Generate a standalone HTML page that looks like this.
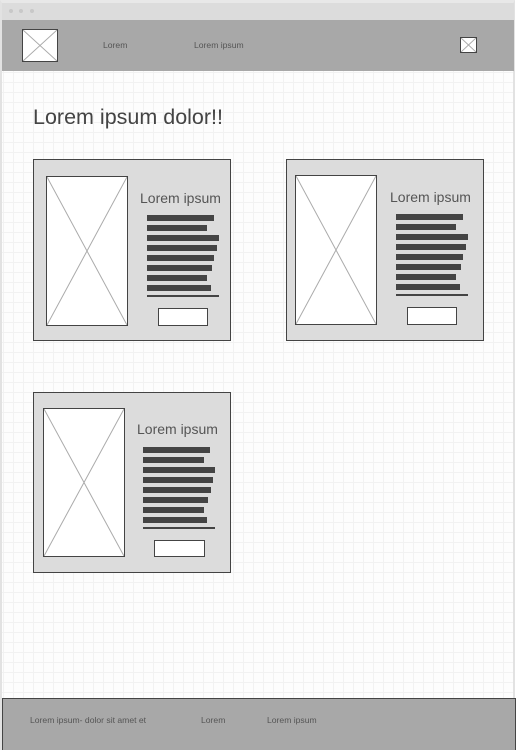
<!DOCTYPE html>
<html><head><meta charset="utf-8"><style>
*{margin:0;padding:0;box-sizing:border-box}
body{width:517px;height:750px;position:relative;overflow:hidden;background:#fff;font-family:"Liberation Sans",sans-serif}
.a{position:absolute}
#page{left:0;top:0;width:515px;height:750px;border:2px solid #e2e2e2;border-top:3px solid #e8e8e8;border-bottom:none;
background-color:#fdfdfd;
background-image:linear-gradient(#f2f2f2 1px,transparent 1px),linear-gradient(90deg,#f2f2f2 1px,transparent 1px);
background-size:10px 10px;background-position:1px 9px}
.card{border:1px solid #444;background:#dcdcdc}
.img{background:#fff;border:1px solid #444}
.img svg{position:absolute;left:0;top:0;width:100%;height:100%}
.bar{position:absolute;height:6px;background:#444}
.btn{background:#fff;border:1px solid #444}
.t{color:#555;white-space:nowrap}
</style></head><body>
<div id="page" class="a"></div>
<div class="a" style="left:2px;top:3px;width:512px;height:17px;background:#dcdcdc"></div>
<div class="a" style="left:9px;top:9px;width:4px;height:4px;border-radius:2px;background:#c8c8c8"></div>
<div class="a" style="left:19px;top:9px;width:4px;height:4px;border-radius:2px;background:#c8c8c8"></div>
<div class="a" style="left:30px;top:9px;width:4px;height:4px;border-radius:2px;background:#c8c8c8"></div>
<div class="a" style="left:2px;top:20px;width:512px;height:51px;background:#a8a8a8"></div>
<div class="a img" style="left:22px;top:29px;width:36px;height:33px"><svg viewBox="0 0 10 10" preserveAspectRatio="none"><path d="M0 0L10 10M10 0L0 10" stroke="#aaa" stroke-width="1" vector-effect="non-scaling-stroke"/></svg></div>
<div class="a t" style="left:103px;top:40px;font-size:8.6px">Lorem</div>
<div class="a t" style="left:194px;top:40px;font-size:8.6px">Lorem ipsum</div>
<div class="a img" style="left:460px;top:37px;width:17px;height:16px"><svg viewBox="0 0 10 10" preserveAspectRatio="none"><path d="M0 0L10 10M10 0L0 10" stroke="#aaa" stroke-width="1" vector-effect="non-scaling-stroke"/></svg></div>
<div class="a" style="left:33px;top:105px;font-size:21.5px;color:#444">Lorem ipsum dolor!!</div>

<!-- card1 -->
<div class="a card" style="left:33px;top:159px;width:198px;height:182px"></div>
<div class="a img" style="left:46px;top:176px;width:82px;height:150px"><svg viewBox="0 0 10 10" preserveAspectRatio="none"><path d="M0 0L10 10M10 0L0 10" stroke="#aaa" stroke-width="1" vector-effect="non-scaling-stroke"/></svg></div>
<div class="a t" style="left:140px;top:190px;font-size:14px">Lorem ipsum</div>
<div class="bar" style="left:147px;top:215px;width:67px"></div>
<div class="bar" style="left:147px;top:225px;width:60px"></div>
<div class="bar" style="left:147px;top:235px;width:72px"></div>
<div class="bar" style="left:147px;top:245px;width:70px"></div>
<div class="bar" style="left:147px;top:255px;width:67px"></div>
<div class="bar" style="left:147px;top:265px;width:65px"></div>
<div class="bar" style="left:147px;top:275px;width:60px"></div>
<div class="bar" style="left:147px;top:285px;width:64px"></div>
<div class="bar" style="left:147px;top:295px;width:72px;height:2px"></div>
<div class="a btn" style="left:158px;top:308px;width:50px;height:18px"></div>

<!-- card2 -->
<div class="a card" style="left:286px;top:159px;width:198px;height:182px"></div>
<div class="a img" style="left:295px;top:175px;width:82px;height:150px"><svg viewBox="0 0 10 10" preserveAspectRatio="none"><path d="M0 0L10 10M10 0L0 10" stroke="#aaa" stroke-width="1" vector-effect="non-scaling-stroke"/></svg></div>
<div class="a t" style="left:390px;top:189px;font-size:14px">Lorem ipsum</div>
<div class="bar" style="left:396px;top:214px;width:67px"></div>
<div class="bar" style="left:396px;top:224px;width:60px"></div>
<div class="bar" style="left:396px;top:234px;width:72px"></div>
<div class="bar" style="left:396px;top:244px;width:70px"></div>
<div class="bar" style="left:396px;top:254px;width:67px"></div>
<div class="bar" style="left:396px;top:264px;width:65px"></div>
<div class="bar" style="left:396px;top:274px;width:60px"></div>
<div class="bar" style="left:396px;top:284px;width:64px"></div>
<div class="bar" style="left:396px;top:294px;width:72px;height:2px"></div>
<div class="a btn" style="left:407px;top:307px;width:50px;height:18px"></div>

<!-- card3 -->
<div class="a card" style="left:33px;top:392px;width:198px;height:181px"></div>
<div class="a img" style="left:43px;top:408px;width:82px;height:149px"><svg viewBox="0 0 10 10" preserveAspectRatio="none"><path d="M0 0L10 10M10 0L0 10" stroke="#aaa" stroke-width="1" vector-effect="non-scaling-stroke"/></svg></div>
<div class="a t" style="left:137px;top:421px;font-size:14px">Lorem ipsum</div>
<div class="bar" style="left:143px;top:447px;width:67px"></div>
<div class="bar" style="left:143px;top:457px;width:61px"></div>
<div class="bar" style="left:143px;top:467px;width:72px"></div>
<div class="bar" style="left:143px;top:477px;width:70px"></div>
<div class="bar" style="left:143px;top:487px;width:68px"></div>
<div class="bar" style="left:143px;top:497px;width:65px"></div>
<div class="bar" style="left:143px;top:507px;width:61px"></div>
<div class="bar" style="left:143px;top:517px;width:64px"></div>
<div class="bar" style="left:143px;top:527px;width:72px;height:2px"></div>
<div class="a btn" style="left:154px;top:540px;width:51px;height:17px"></div>

<!-- footer -->
<div class="a" style="left:2px;top:698px;width:514px;height:52px;background:#a8a8a8;border:1px solid #444;border-bottom:none"></div>
<div class="a t" style="left:30px;top:715px;font-size:8.6px">Lorem ipsum- dolor sit amet et</div>
<div class="a t" style="left:201px;top:715px;font-size:8.6px">Lorem</div>
<div class="a t" style="left:267px;top:715px;font-size:8.6px">Lorem ipsum</div>
</body></html>
